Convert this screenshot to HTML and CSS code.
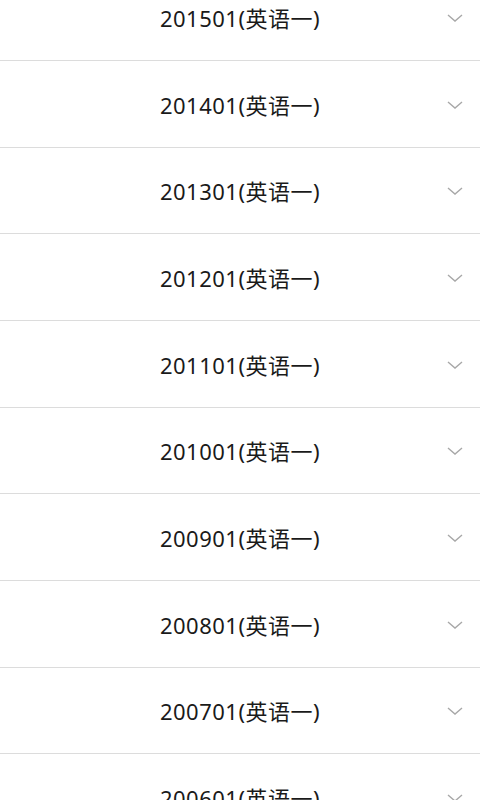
FILE: index.html
```html
<!DOCTYPE html>
<html lang="zh-CN">
  <head>
    <meta charset="UTF-8" />
    <meta name="viewport" content="width=device-width, initial-scale=1.0" />
    <title>真题列表</title>
    <link rel="stylesheet" href="styles.css">
  </head>
  <body>
    <ul class="paper-list">
      <li class="paper-item"><span class="paper-title">201501(英语一)</span><svg class="chevron" viewBox="0 0 16 8"><path d="M1 1 L8 7 L15 1" /></svg></li>
      <li class="paper-item"><span class="paper-title">201401(英语一)</span><svg class="chevron" viewBox="0 0 16 8"><path d="M1 1 L8 7 L15 1" /></svg></li>
      <li class="paper-item"><span class="paper-title">201301(英语一)</span><svg class="chevron" viewBox="0 0 16 8"><path d="M1 1 L8 7 L15 1" /></svg></li>
      <li class="paper-item"><span class="paper-title">201201(英语一)</span><svg class="chevron" viewBox="0 0 16 8"><path d="M1 1 L8 7 L15 1" /></svg></li>
      <li class="paper-item"><span class="paper-title">201101(英语一)</span><svg class="chevron" viewBox="0 0 16 8"><path d="M1 1 L8 7 L15 1" /></svg></li>
      <li class="paper-item"><span class="paper-title">201001(英语一)</span><svg class="chevron" viewBox="0 0 16 8"><path d="M1 1 L8 7 L15 1" /></svg></li>
      <li class="paper-item"><span class="paper-title">200901(英语一)</span><svg class="chevron" viewBox="0 0 16 8"><path d="M1 1 L8 7 L15 1" /></svg></li>
      <li class="paper-item"><span class="paper-title">200801(英语一)</span><svg class="chevron" viewBox="0 0 16 8"><path d="M1 1 L8 7 L15 1" /></svg></li>
      <li class="paper-item"><span class="paper-title">200701(英语一)</span><svg class="chevron" viewBox="0 0 16 8"><path d="M1 1 L8 7 L15 1" /></svg></li>
      <li class="paper-item"><span class="paper-title">200601(英语一)</span><svg class="chevron" viewBox="0 0 16 8"><path d="M1 1 L8 7 L15 1" /></svg></li>
    </ul>
  </body>
</html>
```

FILE: styles.css
```css
body {
  margin: 0;
  background-color: #ffffff;
  font-family: "Noto Sans", "Noto Sans CJK SC", sans-serif;
  overflow: hidden;
  height: 800px;
}

.paper-list {
  list-style: none;
  margin: 0;
  margin-top: -25.7px;
  padding: 0;
}

.paper-item {
  position: relative;
  display: flex;
  justify-content: center;
  align-items: center;
  height: 86.67px;
  box-sizing: border-box;
  border-bottom: 1px solid #dcdcdc;
}

.paper-title {
  font-size: 22px;
  color: #1a1a1a;
  letter-spacing: 0.5px;
}

.chevron {
  position: absolute;
  right: 17px;
  top: 50%;
  width: 16px;
  height: 8px;
  margin-top: -3px;
  fill: none;
  stroke: #a8a8a8;
  stroke-width: 1.4;
}
```
